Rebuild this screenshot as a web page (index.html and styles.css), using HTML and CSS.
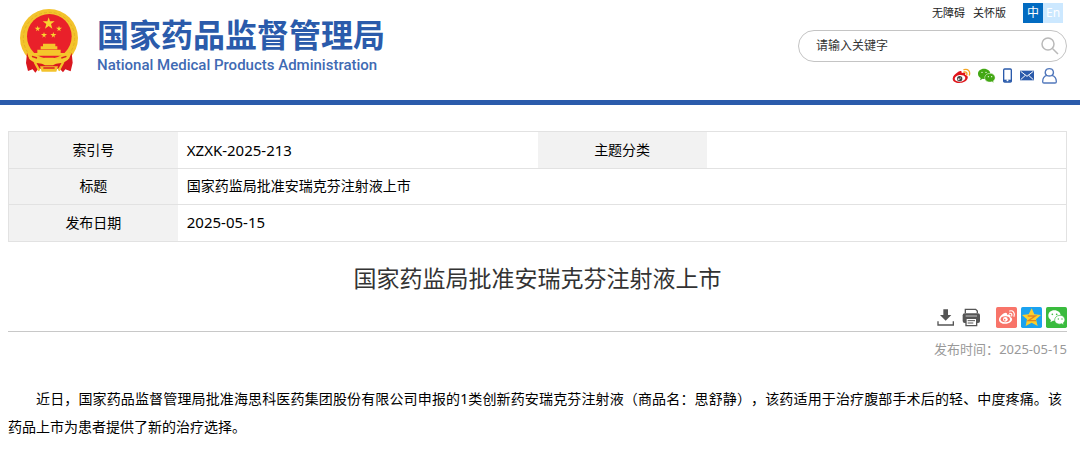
FILE: index.html
```html
<!DOCTYPE html>
<html lang="zh-CN">
<head>
<meta charset="utf-8">
<title>国家药监局批准安瑞克芬注射液上市</title>
<link rel="stylesheet" href="styles.css">
</head>
<body>
<header class="site-header">
  <a class="brand" href="#">
    <svg class="emblem" viewBox="0 0 225 225" aria-hidden="true">
      <circle cx="111" cy="102" r="87" fill="#f3c32c"/>
      <circle cx="111" cy="102" r="77" fill="none" stroke="#e5b324" stroke-width="3" stroke-dasharray="9 6"/>
      <circle cx="112" cy="97" r="67" fill="#e9202a"/>
      <path d="M45 146 52 165 69 170 90 178H133L153 170 171 164 179 146 182 176 176 202 160 196 153 205 143 194H79L70 206 62 196 48 201 42 177Z" fill="#d9171f"/>
      <path fill="#f9d430" d="M110 40l4 12h14l-11 8 4 14-11-8-11 8 4-14-11-8h14zM77 65l2 6h7l-6 5 2 6-5-4-5 4 2-6-6-5h7zM141 65l2 6h7l-6 5 2 6-5-4-5 4 2-6-6-5h7zM96 84l2 6h7l-6 5 2 6-5-4-5 4 2-6-6-5h7zM124 84l2 6h7l-6 5 2 6-5-4-5 4 2-6-6-5h7z"/>
      <path fill="#f5c62b" d="M93 119H130V127H136V136H86V127H93ZM76 137H146V147H174V155H48V147H76Z"/>
      <path d="M47 151Q63 168 87 166L98 161H124L135 166Q159 168 175 151L168 167 154 176 132 179 123 184H99L90 179 68 176 54 167Z" fill="#f6cb31"/>
      <path d="M68 174 82 200M154 174 140 200" stroke="#f3c32c" stroke-width="7"/>
      <path d="M84 187H138L133 203H89Z" fill="#f3c32c"/>
      <path d="M94 192H128M75 162 60 157M148 162 163 157" stroke="#da1d20" stroke-width="4"/>
    </svg>
    <span class="brand-text">
      <span class="brand-cn">国家药品监督管理局</span>
      <span class="brand-en" lang="en">National Medical Products Administration</span>
    </span>
  </a>
  <div class="tools">
    <nav class="top-links">
      <a href="#">无障碍</a>
      <a href="#">关怀版</a>
      <span class="langs"><a class="lang lang-on" href="#">中</a><a class="lang" href="#" lang="en">En</a></span>
    </nav>
    <form class="search">
      <input class="search-input" type="search" aria-label="请输入关键字" placeholder="请输入关键字">
      <button class="search-button" type="button" aria-label="搜索">
        <svg width="18" height="18" viewBox="0 0 18 18" fill="none" stroke="#b9b9b9" stroke-width="1.5"><circle cx="7" cy="7" r="6"/><path d="M11.5 11.5 17 17"/></svg>
      </button>
    </form>
    <nav class="channels">
      <a href="#" aria-label="微博"><svg width="19" height="16" viewBox="63 24 57 48">
        <path d="M81 36C91 30 93 34 92 39C103 35 105 39 102 44C108 45 112 49 110 55C106 65 96 69 85 69C73 69 65 63 65 56C65 49 73 41 81 36Z" fill="#e0151b"/>
        <ellipse cx="87" cy="55" rx="16" ry="10" fill="#fff" transform="rotate(-6 87 55)"/><circle cx="86" cy="56" r="8" fill="#444"/><circle cx="83" cy="58" r="3" fill="#ddd"/><circle cx="88" cy="54" r="1.5" fill="#fff"/>
        <path d="M99 29C110 25 119 34 115 45M99 36C105 34 110 39 107 45" fill="none" stroke="#f5a622" stroke-width="4" stroke-linecap="round"/>
      </svg></a>
      <a href="#" aria-label="微信"><svg width="19" height="16" viewBox="138 24 57 48">
        <path d="M159 26C148 26 141 33 141 41C141 47 144 51 149 54L147 61 155 56C168 59 178 51 178 41C178 33 170 26 159 26Z" fill="#43a814"/>
        <path d="M177 40C168 40 161 46 161 53C161 63 172 69 183 65L189 69 187 63C198 55 191 40 177 40Z" fill="#43a814" stroke="#fff" stroke-width="1.5"/>
        <g fill="#fff"><circle cx="153" cy="37" r="2"/><circle cx="165" cy="37" r="2"/><circle cx="172" cy="50" r="1.8"/><circle cx="182" cy="50" r="1.8"/></g>
      </svg></a>
      <a href="#" aria-label="移动端"><svg width="11" height="16" viewBox="213 24 33 48"><rect x="218" y="27" width="23" height="39" rx="3" fill="#fff" stroke="#2b5bab" stroke-width="4"/><path d="M217 59H242V65H217Z" fill="#2b5bab"/><circle cx="229.500" cy="61" r="3" fill="#fff"/></svg></a>
      <a href="#" aria-label="邮箱"><svg width="16" height="16" viewBox="264 24 48 48"><rect x="267" y="32" width="42" height="29" fill="#2b5bab"/><path d="M269 34 288 49 307 34M269 59 283 46M307 59 293 46" fill="none" stroke="#fff" stroke-width="3"/></svg></a>
      <a href="#" aria-label="个人中心"><svg width="17" height="16" viewBox="333 24 51 48"><path d="M350 46C343 41 344 26 358 26C372 26 373 41 366 46C376 49 379 57 379 65Q379 69 375 69H342Q338 69 338 65C338 57 340 49 350 46Q358 50 366 46" fill="none" stroke="#5278bc" stroke-width="4"/></svg></a>
    </nav>
  </div>
</header>
<main class="page">
  <table class="info">
    <tr><th scope="row">索引号</th><td><span class="code">XZXK-2025-213</span></td><th scope="row">主题分类</th><td></td></tr>
    <tr><th scope="row">标题</th><td colspan="3">国家药监局批准安瑞克芬注射液上市</td></tr>
    <tr><th scope="row">发布日期</th><td colspan="3"><span class="code">2025-05-15</span></td></tr>
  </table>
  <article>
    <h1 class="title">国家药监局批准安瑞克芬注射液上市</h1>
    <div class="actions">
      <div class="action-group action-files">
        <button type="button" aria-label="下载"><svg width="18" height="19" viewBox="51 42 54 57"><path d="M70 46H84V63H94L77 80 60 63H70Z" fill="#555"/><path d="M54 82V93H100V82" fill="none" stroke="#555" stroke-width="4"/></svg></button>
        <button type="button" aria-label="打印"><svg width="19" height="19" viewBox="126 42 57 57"><path d="M136 58V46H167L172 51V58" fill="#fff" stroke="#555" stroke-width="4"/><rect x="128" y="58" width="52" height="29" rx="6" fill="#555"/><path d="M138 73H170V95H138Z" fill="#fff" stroke="#555" stroke-width="4"/><path d="M143 80H165M143 87H160" stroke="#555" stroke-width="3"/><path d="M137 66H171" stroke="#fff" stroke-width="2"/></svg></button>
      </div>
      <div class="action-group">
        <a href="#" aria-label="分享到微博"><svg width="21" height="21" viewBox="0 0 63 63"><rect width="63" height="63" rx="5" fill="#f87469"/><path d="M24 19C31 15 35 19 33 24C42 21 45 24 43 30C50 33 50 40 44 45C34 54 9 52 9 38C9 31 17 23 24 19Z" fill="#fff"/><ellipse cx="28" cy="37" rx="14" ry="9" fill="#f87469"/><circle cx="28" cy="37" r="7" fill="#fff"/><circle cx="26" cy="38" r="2.500" fill="#f87469"/><path d="M41 12C51 9 58 18 54 28M41 19C46 18 49 22 47 27" fill="none" stroke="#fff" stroke-width="3.500" stroke-linecap="round"/></svg></a>
        <a href="#" aria-label="分享到QQ空间"><svg width="21" height="21" viewBox="0 0 63 63"><rect width="63" height="63" rx="5" fill="#1ba2ef"/><path d="M32 4 40 22 60 24 45 37 50 57 32 47 14 57 18 37 3 24 23 22Z" fill="#fcce2c"/><path d="M20 27H43L22 41H45" fill="none" stroke="#df8520" stroke-width="4"/></svg></a>
        <a href="#" aria-label="分享到微信"><svg width="21" height="21" viewBox="0 0 63 63"><rect width="63" height="63" rx="5" fill="#3abb3e"/><path d="M25 10C14 10 7 17 7 26C7 32 11 36 15 39L13 46 21 41C35 43 44 36 44 26C44 17 36 10 25 10Z" fill="#fff"/><path d="M42 25C32 25 26 32 26 39C26 49 37 54 47 50L54 54 52 48C62 39 55 25 42 25Z" fill="#fff" stroke="#3abb3e" stroke-width="2"/><g fill="#3abb3e"><circle cx="19" cy="22" r="2.500"/><circle cx="32" cy="22" r="2.500"/><circle cx="37" cy="36" r="2"/><circle cx="48" cy="36" r="2"/></g></svg></a>
      </div>
    </div>
    <p class="published">发布时间：<time datetime="2025-05-15">2025-05-15</time></p>
    <p class="body-text">近日，国家药品监督管理局批准海思科医药集团股份有限公司申报的1类创新药安瑞克芬注射液（商品名：思舒静），该药适用于治疗腹部手术后的轻、中度疼痛。该药品上市为患者提供了新的治疗选择。</p>
  </article>
</main>
</body>
</html>
```
FILE: styles.css
```css
* { box-sizing: border-box; }

body {
  margin: 0;
  background: #fff;
  color: #000;
  font: 14px/20px "Noto Sans", "Noto Sans CJK SC", sans-serif;
}

a { color: inherit; text-decoration: none; }
svg { display: block; }
button { padding: 0; border: 0; background: none; cursor: pointer; }

.site-header {
  display: flex;
  justify-content: space-between;
  align-items: flex-start;
  padding: 3px 13px 16px 12px;
  border-bottom: 5px solid #2b5bab;
}

.brand { display: flex; gap: 10px; color: #2b5bab; }
.emblem { width: 75px; height: 75px; margin-top: 1px; }
.brand-text { display: flex; flex-direction: column; padding-top: 13px; }
.brand-cn { font-size: 32px; line-height: 38px; font-weight: 700; }
.brand-en { font: 500 15px/22px Roboto, sans-serif; color: #3f6ab3; }

.tools { display: flex; flex-direction: column; width: 269px; }
.top-links {
  display: flex;
  justify-content: flex-end;
  align-items: center;
  gap: 8px;
  padding-right: 4px;
  color: #222;
  font-size: 11px;
}
.langs { display: flex; margin-left: 9px; font-size: 12px; }
.lang {
  width: 20px;
  background: #cce8ff;
  color: #fff;
  text-align: center;
}
.lang-on { background: #026bc1; }

.search {
  display: flex;
  align-items: center;
  height: 32px;
  margin-top: 7px;
  padding: 0 7px 0 17px;
  border: 1px solid #c4c4c4;
  border-radius: 16px;
}
.search-input {
  flex: 1;
  min-width: 0;
  padding: 0;
  border: 0;
  outline: 0;
  background: none;
  color: #333;
  font: inherit;
  font-size: 12px;
}
.search-input::placeholder { color: #333; opacity: 1; }

.channels {
  display: flex;
  justify-content: flex-end;
  gap: 6px;
  padding: 6px 9px 0 0;
}

.page { padding: 26px 13px 10px 8px; }

.info {
  width: 100%;
  height: 111px;
  border: 1px solid #e2e2e2;
  border-collapse: collapse;
  table-layout: fixed;
}
.info tr { border-bottom: 1px solid #e2e2e2; }
.info th {
  width: 16%;
  padding: 0;
  background: #f2f2f2;
  font-weight: 400;
}
.info td { padding: 0 9px; }
.code { font-size: 15px; }

.title {
  margin: 19px 0 0;
  color: #333;
  font-size: 23px;
  line-height: 34px;
  font-weight: 400;
  text-align: center;
}

.actions {
  display: flex;
  justify-content: flex-end;
  align-items: center;
  gap: 15px;
  margin-top: 12px;
  padding-bottom: 3px;
  border-bottom: 1px solid #c8c8c8;
}
.action-group { display: flex; gap: 4px; }
.action-files { gap: 7px; }

.published {
  margin: 7px 0 0;
  color: #999;
  font-size: 13px;
  text-align: right;
}

.body-text {
  margin: 26px 0 0;
  padding-right: 5px;
  line-height: 28px;
  text-align: justify;
  text-indent: 2em;
  text-spacing-trim: space-all;
}
```
